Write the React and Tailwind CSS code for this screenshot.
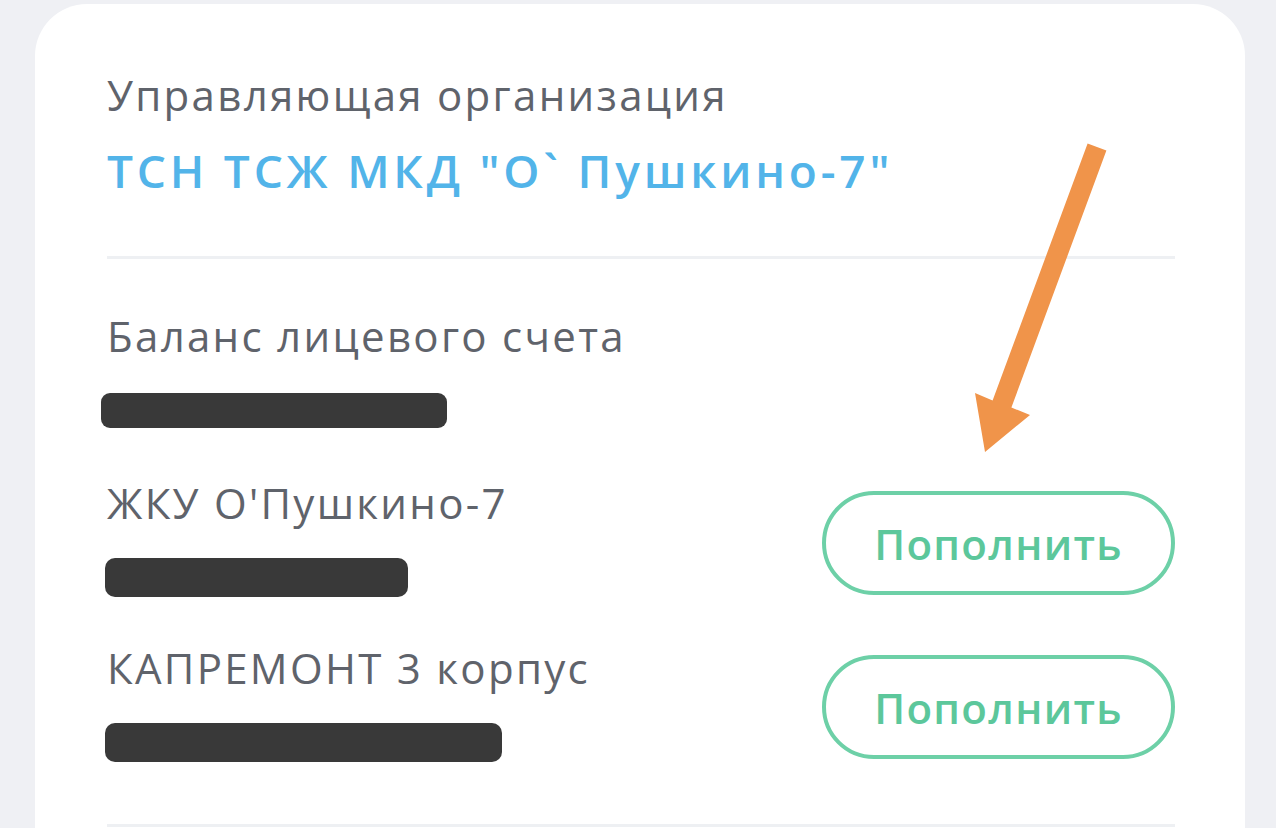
import React from "react";

const font = { fontFamily: '"Open Sans", "Noto Sans", sans-serif' };

function Row({ label, w, btnClass }) {
  return (
    <div className="flex items-start justify-between">
      <div className="flex flex-col">
        <div className="text-[42px] leading-[48px] text-[#5f636b] tracking-[2.3px]">{label}</div>
        <div className="mt-[31px] -ml-[2px] h-[39px] rounded-[10px] bg-[#393939]" style={{ width: w }} />
      </div>
      <button
        className={`${btnClass} w-[353px] h-[104px] rounded-full border-[4px] border-[#6dd0a7] text-[#5cc79b] text-[42px] font-semibold tracking-[1.3px] flex items-center justify-center`}
      >
        Пополнить
      </button>
    </div>
  );
}

export default function App() {
  return (
    <div className="relative w-[1276px] h-[828px] overflow-hidden bg-[#eff0f4]" style={font}>
      <div className="ml-[35px] mt-[4px] w-[1210px] h-[900px] bg-white rounded-[52px] pl-[72px] pr-[70px] pt-[67px]">
        <div className="text-[42px] leading-[48px] text-[#5f636b] tracking-[2.3px]">Управляющая организация</div>
        <div className="mt-[23px] text-[46px] leading-[56px] font-semibold text-[#52b4e9] tracking-[3.8px]">
          ТСН ТСЖ МКД "О` Пушкино-7"
        </div>
        <div className="mt-[58px] h-[3px] bg-[#eef0f3]" />
        <div className="mt-[53px] text-[42px] leading-[48px] text-[#5f636b] tracking-[2.3px]">Баланс лицевого счета</div>
        <div className="mt-[33px] -ml-[6px] w-[346px] h-[35px] rounded-[9px] bg-[#393939]" />
        <div className="mt-[51px]">
          <Row label="ЖКУ О'Пушкино-7" w={303} btnClass="mt-[12px]" />
        </div>
        <div className="mt-[47px]">
          <Row label="КАПРЕМОНТ 3 корпус" w={397} btnClass="mt-[11px]" />
        </div>
        <div className="mt-[62px] h-[3px] bg-[#eef0f3]" />
      </div>
      <svg className="absolute inset-0 pointer-events-none" width="1276" height="828" viewBox="0 0 1276 828">
        <polygon
          fill="#f0944a"
          points="1087.6,143.5 1106.4,150.5 1011.4,407.5 1030,415 985,452 975,393 992.6,400.5"
        />
      </svg>
    </div>
  );
}
